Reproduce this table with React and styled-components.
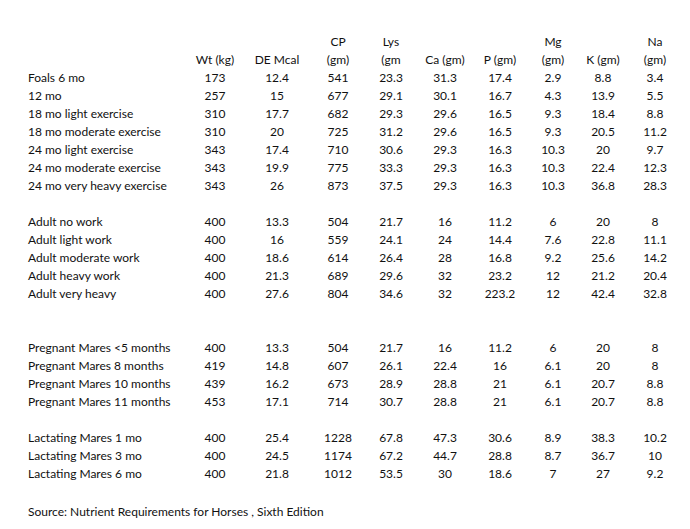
import React from "react";
import styled, { createGlobalStyle } from "styled-components";

const Global = createGlobalStyle`
  html, body { margin: 0; padding: 0; background: #ffffff; }
  body { font-family: Lato, "Open Sans", sans-serif; color: #111111; }
`;

const Page = styled.div`
  width: 690px;
  height: 529px;
  padding-top: 33px;
  box-sizing: border-box;
`;

const Table = styled.div`
  display: grid;
  grid-template-columns: 157px 60px 64px 58px 48px 60px 50px 56px 44px 60px;
  grid-auto-rows: 18px;
  padding-left: 28px;
  font-size: 12px;
  line-height: 18px;
`;

const Label = styled.div`
  white-space: nowrap;
  text-align: left;
`;

const Cell = styled.div`
  white-space: nowrap;
  text-align: center;
`;

const Spacer = styled.div`
  grid-column: 1 / -1;
  grid-row: span ${(p) => p.rows};
`;

const Source = styled.div`
  grid-column: 1 / -1;
  white-space: nowrap;
  padding-top: 2px;
`;

const header1 = ["", "", "", "CP", "Lys", "", "", "Mg", "", "Na"];
const header2 = ["", "Wt (kg)", "DE Mcal", "(gm)", "(gm", "Ca (gm)", "P (gm)", "(gm)", "K (gm)", "(gm)"];

const groups = [
  [
    ["Foals 6 mo", "173", "12.4", "541", "23.3", "31.3", "17.4", "2.9", "8.8", "3.4"],
    ["12 mo", "257", "15", "677", "29.1", "30.1", "16.7", "4.3", "13.9", "5.5"],
    ["18 mo light exercise", "310", "17.7", "682", "29.3", "29.6", "16.5", "9.3", "18.4", "8.8"],
    ["18 mo moderate exercise", "310", "20", "725", "31.2", "29.6", "16.5", "9.3", "20.5", "11.2"],
    ["24 mo light exercise", "343", "17.4", "710", "30.6", "29.3", "16.3", "10.3", "20", "9.7"],
    ["24 mo moderate exercise", "343", "19.9", "775", "33.3", "29.3", "16.3", "10.3", "22.4", "12.3"],
    ["24 mo very heavy exercise", "343", "26", "873", "37.5", "29.3", "16.3", "10.3", "36.8", "28.3"],
  ],
  [
    ["Adult no work", "400", "13.3", "504", "21.7", "16", "11.2", "6", "20", "8"],
    ["Adult light work", "400", "16", "559", "24.1", "24", "14.4", "7.6", "22.8", "11.1"],
    ["Adult moderate work", "400", "18.6", "614", "26.4", "28", "16.8", "9.2", "25.6", "14.2"],
    ["Adult heavy work", "400", "21.3", "689", "29.6", "32", "23.2", "12", "21.2", "20.4"],
    ["Adult very heavy", "400", "27.6", "804", "34.6", "32", "223.2", "12", "42.4", "32.8"],
  ],
  [
    ["Pregnant Mares <5 months", "400", "13.3", "504", "21.7", "16", "11.2", "6", "20", "8"],
    ["Pregnant Mares 8 months", "419", "14.8", "607", "26.1", "22.4", "16", "6.1", "20", "8"],
    ["Pregnant Mares 10 months", "439", "16.2", "673", "28.9", "28.8", "21", "6.1", "20.7", "8.8"],
    ["Pregnant Mares 11 months", "453", "17.1", "714", "30.7", "28.8", "21", "6.1", "20.7", "8.8"],
  ],
  [
    ["Lactating Mares 1 mo", "400", "25.4", "1228", "67.8", "47.3", "30.6", "8.9", "38.3", "10.2"],
    ["Lactating Mares 3 mo", "400", "24.5", "1174", "67.2", "44.7", "28.8", "8.7", "36.7", "10"],
    ["Lactating Mares 6 mo", "400", "21.8", "1012", "53.5", "30", "18.6", "7", "27", "9.2"],
  ],
];

const gaps = [1, 2, 1];

function Row({ cells }) {
  return cells.map((c, i) =>
    i === 0 ? <Label key={i}>{c}</Label> : <Cell key={i}>{c}</Cell>
  );
}

export default function App() {
  return (
    <Page>
      <Global />
      <Table>
        <Row cells={header1} />
        <Row cells={header2} />
        {groups.map((g, gi) => (
          <React.Fragment key={gi}>
            {g.map((r, ri) => (
              <Row key={ri} cells={r} />
            ))}
            {gi < gaps.length && <Spacer rows={gaps[gi]} />}
          </React.Fragment>
        ))}
        <Spacer rows={1} />
        <Source>Source: Nutrient Requirements for Horses , Sixth Edition</Source>
      </Table>
    </Page>
  );
}
